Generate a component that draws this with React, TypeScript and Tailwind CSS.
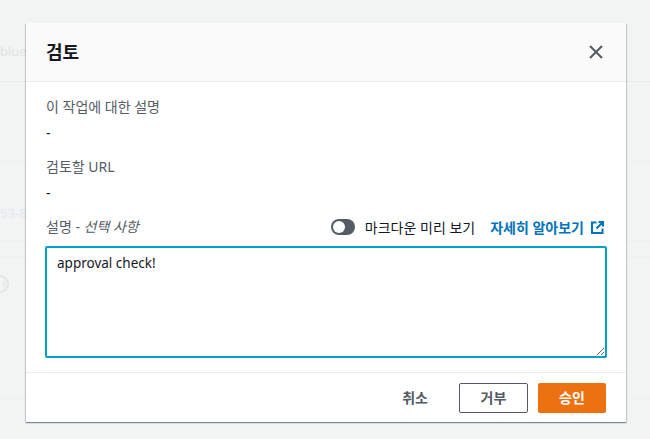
const FONT = "font-['Noto_Sans','Noto_Sans_CJK_KR',sans-serif]";

function CloseIcon() {
  return (
    <svg width="16" height="16" viewBox="0 0 16 16" fill="none" stroke="#545b64" strokeWidth="2">
      <path d="M2 2l12 12M14 2L2 14" />
    </svg>
  );
}

function ExternalIcon() {
  return (
    <svg width="13" height="13" viewBox="0 0 13 13" fill="none" stroke="#0073bb" strokeWidth="2">
      <path d="M5.5 1.5H1v10.5h10.5V7.5M7.5 1h4.5v4.5M12 1L5.5 7.5" />
    </svg>
  );
}

export default function App() {
  return (
    <div className={`relative h-[439px] w-[650px] overflow-hidden bg-[#f2f4f4] ${FONT}`}>
      {/* faded page behind the dialog */}
      <div className="flex h-full flex-col text-[13px] text-[#dfe3e3]">
        <div className="h-[82px] border-b border-[#e9ebeb] pt-[42px] leading-[18px]">blue</div>
        <div className="h-[80px] border-b border-[#eef0f0]"></div>
        <div className="h-[79px] border-b border-[#eef0f0] pt-[42px] text-[#e3e8ee]">53-8</div>
        <div className="h-[16px] border-b border-[#eef0f0]"></div>
        <div className="h-[142px] border-b border-[#eef0f0] pt-[18px]">
          <div className="-ml-[9px] flex h-[18px] w-[18px] items-center justify-center rounded-full border-2 border-[#e3e5e5] text-[9px] font-bold text-[#e3e5e5]">
            <span className="ml-[8px]">i</span>
          </div>
        </div>
      </div>

      {/* dialog */}
      <div className="absolute top-[23px] left-[26px] flex h-[399px] w-[600px] flex-col bg-white shadow-[0_1px_1px_0_rgba(0,28,36,0.3),1px_1px_1px_0_rgba(0,28,36,0.15),-1px_1px_1px_0_rgba(0,28,36,0.15)]">
        <div className="flex h-[59px] items-center justify-between border-b border-[#eaeded] bg-[#fafafa] pr-[22px] pl-[20px]">
          <h2 className="text-[18px] font-bold text-[#16191f]">검토</h2>
          <CloseIcon />
        </div>

        <div className="flex flex-1 flex-col px-[20px] pt-[14px]">
          <div className="text-[14px] leading-[22px] text-[#545b64]">이 작업에 대한 설명</div>
          <div className="mt-[4px] text-[14px] leading-[22px] text-[#16191f]">-</div>
          <div className="mt-[12px] text-[14px] leading-[22px] text-[#545b64]">검토할 URL</div>
          <div className="mt-[4px] text-[14px] leading-[22px] text-[#16191f]">-</div>

          <div className="mt-[12px] flex items-center justify-between">
            <div className="text-[14px] leading-[22px] text-[#545b64]">
              설명 - <i>선택 사항</i>
            </div>
            <div className="flex items-center">
              <span className="flex h-[16px] w-[24px] items-center rounded-full bg-[#545b64] pl-[2px]">
                <span className="h-[12px] w-[12px] rounded-full bg-white"></span>
              </span>
              <span className="ml-[10px] text-[14px] text-[#16191f]">마크다운 미리 보기</span>
              <span className="ml-[15px] text-[14px] font-bold text-[#0073bb]">자세히 알아보기</span>
              <span className="mr-[2px] ml-[7px]"><ExternalIcon /></span>
            </div>
          </div>

          <textarea
            readOnly
            defaultValue="approval check!"
            className="mt-[8px] -ml-[1px] h-[112px] w-[562px] rounded-[2px] border-2 border-[#00a1c9] px-[10px] py-[4px] text-[13.5px] leading-[22px] text-[#16191f] outline-none"
          />
        </div>

        <div className="flex h-[50px] items-center justify-end border-t border-[#eaeded] pr-[20px]">
          <button className="text-[14px] font-bold text-[#545b64]">취소</button>
          <button className="ml-[31px] h-[30px] w-[69px] rounded-[2px] border border-[#545b64] bg-white text-[14px] font-bold text-[#545b64]">거부</button>
          <button className="ml-[10px] h-[30px] w-[68px] rounded-[2px] bg-[#ec7211] text-[14px] font-bold text-white">승인</button>
        </div>
      </div>
    </div>
  );
}
